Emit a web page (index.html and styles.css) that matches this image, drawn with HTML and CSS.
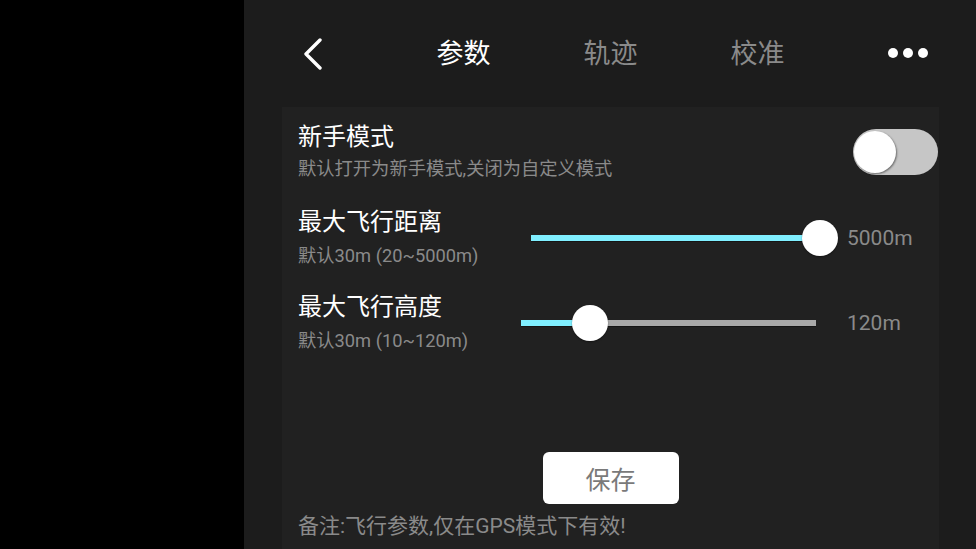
FILE: index.html
```html
<!DOCTYPE html>
<html lang="zh-CN">
<head>
  <meta charset="UTF-8">
  <meta name="viewport" content="width=device-width, initial-scale=1.0">
  <title>参数设置</title>
  <link rel="stylesheet" href="styles.css">
</head>
<body>
  <div class="screen">
    <aside class="side"></aside>

    <main class="main">
      <header class="topbar">
        <button class="back" aria-label="返回">
          <svg width="22" height="32" viewBox="0 0 22 32">
            <path d="M18 2 L4 16 L18 30" fill="none" stroke="#fff" stroke-width="3.4" stroke-linecap="round" stroke-linejoin="round"/>
          </svg>
        </button>
        <nav class="tabs">
          <span class="tab active">参数</span>
          <span class="tab">轨迹</span>
          <span class="tab">校准</span>
        </nav>
        <div class="more">
          <i></i><i></i><i></i>
        </div>
      </header>

      <section class="panel">
        <div class="setting">
          <div class="setting-text">
            <h4>新手模式</h4>
            <p>默认打开为新手模式,关闭为自定义模式</p>
          </div>
          <div class="switch">
            <span class="knob"></span>
          </div>
        </div>

        <div class="setting">
          <div class="setting-text fixed">
            <h4>最大飞行距离</h4>
            <p>默认30m (20~5000m)</p>
          </div>
          <div class="slider slider-distance">
            <div class="track">
              <div class="fill" style="width: 100%"></div>
              <span class="thumb" style="left: 100%"></span>
            </div>
            <span class="value">5000m</span>
          </div>
        </div>

        <div class="setting">
          <div class="setting-text fixed">
            <h4>最大飞行高度</h4>
            <p>默认30m (10~120m)</p>
          </div>
          <div class="slider slider-height">
            <div class="track">
              <div class="fill" style="width: 23.4%"></div>
              <span class="thumb" style="left: 23.4%"></span>
            </div>
            <span class="value">120m</span>
          </div>
        </div>

        <div class="actions">
          <button class="save">保存</button>
        </div>
        <p class="note">备注:飞行参数,仅在GPS模式下有效!</p>
      </section>
    </main>
  </div>
</body>
</html>
```

FILE: styles.css
```css
body {
  margin: 0;
  padding: 0;
  font-family: Roboto, "Noto Sans CJK SC", sans-serif;
  background-color: #000;
  overflow: hidden;
}
.screen {
  display: flex;
  width: 976px;
  height: 549px;
}
.side {
  width: 244px;
  background-color: #000;
}
.main {
  flex: 1;
  display: flex;
  flex-direction: column;
  background-color: #1c1c1c;
  padding: 0 37px 0 38px;
}
.topbar {
  height: 107px;
  display: flex;
  align-items: center;
}
.back {
  margin-left: 20px;
  padding: 0;
  border: none;
  background: none;
  display: flex;
  align-items: center;
}
.tabs {
  display: flex;
  margin-left: 66px;
}
.tab {
  width: 147px;
  text-align: center;
  font-size: 27px;
  line-height: 34px;
  color: #8a8a8a;
}
.tab.active {
  color: #fff;
}
.more {
  display: flex;
  gap: 5px;
  margin-left: 57px;
  margin-top: -2px;
}
.more i {
  width: 10px;
  height: 10px;
  border-radius: 50%;
  background-color: #fff;
}
.panel {
  flex: 1;
  background-color: #212121;
  padding: 16px 1px 0 16px;
  display: flex;
  flex-direction: column;
}
.setting {
  display: flex;
  align-items: center;
  justify-content: space-between;
  margin-bottom: 26px;
}
.setting-text h4 {
  margin: 0;
  font-size: 24px;
  line-height: 28px;
  font-weight: normal;
  color: #fff;
}
.setting-text p {
  margin: 9px 0 0;
  font-size: 18.3px;
  line-height: 22px;
  color: #8a8a8a;
}
.setting:first-child .setting-text p {
  margin-top: 7px;
}
.setting:first-child {
  margin-bottom: 28px;
}
.setting-text.fixed {
  width: 223px;
}
.switch {
  width: 85px;
  height: 46px;
  border-radius: 23px;
  background-color: #c6c6c6;
  position: relative;
}
.knob {
  position: absolute;
  left: 1px;
  top: 2px;
  width: 42px;
  height: 42px;
  border-radius: 50%;
  background-color: #fff;
  box-shadow: 1px 1px 2px rgba(0, 0, 0, 0.45);
}
.slider {
  flex: 1;
  display: flex;
  align-items: center;
}
.track {
  position: relative;
  height: 6px;
  background-color: #a9a9a9;
  box-shadow: 0 1px 0 rgba(0, 0, 0, 0.35);
}
.fill {
  height: 100%;
  background-color: #80efff;
}
.thumb {
  position: absolute;
  top: 50%;
  width: 36px;
  height: 36px;
  margin: -18px 0 0 -18px;
  border-radius: 50%;
  background-color: #fff;
  box-shadow: 0 1px 2px rgba(0, 0, 0, 0.4);
}
.slider-distance {
  margin-left: 10px;
}
.slider-distance .track {
  width: 289px;
}
.slider-distance .value {
  margin-left: 27px;
}
.slider-height .track {
  width: 295px;
}
.slider-height .value {
  margin-left: 31px;
}
.value {
  font-size: 21px;
  color: #8a8a8a;
}
.actions {
  display: flex;
  justify-content: center;
  margin-top: 74px;
  padding-right: 15px;
}
.save {
  width: 136px;
  height: 52px;
  border: none;
  border-radius: 6px;
  background-color: #fff;
  font-family: Roboto, "Noto Sans CJK SC", sans-serif;
  font-size: 25px;
  color: #7a7a7a;
}
.note {
  margin: 9px 0 0;
  font-size: 21px;
  line-height: 26px;
  color: #8a8a8a;
}
```
